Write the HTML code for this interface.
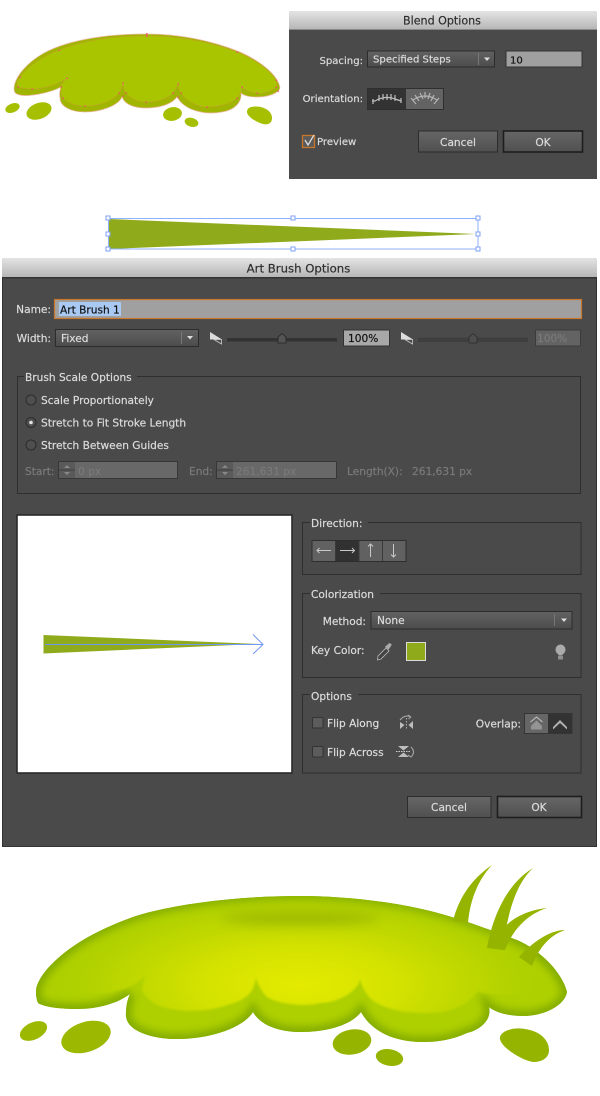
<!DOCTYPE html>
<html><head><meta charset="utf-8"><style>
html,body{margin:0;padding:0;background:#fff;width:600px;height:1096px;overflow:hidden}
svg{display:block}
text{font-family:"DejaVu Sans","Liberation Sans",sans-serif;font-size:10.6px;fill:#dcdcdc;stroke:#dcdcdc;stroke-width:.18}
.s{font-size:10.1px}
.t{fill:#2e2e2e;stroke:#2e2e2e;font-size:11.1px}
.t2{fill:#2e2e2e;stroke:#2e2e2e;font-size:11.7px}
.d{fill:#7a7a7a;stroke:#7a7a7a}
.k{fill:#111;stroke:#111}
.g{fill:none;stroke:#2f2f2f;stroke-width:1}
</style></head><body>
<svg width="600" height="1096" viewBox="0 0 600 1096" xmlns="http://www.w3.org/2000/svg">
<defs>
<linearGradient id="tb" x1="0" y1="0" x2="0" y2="1"><stop offset="0" stop-color="#e4e4e4"/><stop offset="1" stop-color="#b4b4b4"/></linearGradient>
<linearGradient id="btn" x1="0" y1="0" x2="0" y2="1"><stop offset="0" stop-color="#666"/><stop offset="1" stop-color="#505050"/></linearGradient>
<linearGradient id="sel" x1="0" y1="0" x2="0" y2="1"><stop offset="0" stop-color="#626262"/><stop offset="1" stop-color="#4c4c4c"/></linearGradient>
<radialGradient id="rg2" gradientUnits="userSpaceOnUse" cx="300" cy="985" r="250" gradientTransform="translate(0 610.700) scale(1 .38)"><stop offset="0" stop-color="#e4ea00"/><stop offset=".4" stop-color="#d4e200"/><stop offset=".75" stop-color="#bcd600" stop-opacity=".85"/><stop offset="1" stop-color="#aed000" stop-opacity="0"/></radialGradient>
<filter id="b1" x="-20%" y="-20%" width="140%" height="140%"><feGaussianBlur stdDeviation="1"/></filter>
<filter id="b35" x="-10%" y="-20%" width="120%" height="140%"><feGaussianBlur stdDeviation="4"/></filter>
<filter id="b4" x="-50%" y="-200%" width="200%" height="500%"><feGaussianBlur stdDeviation="6"/></filter>
<path id="bigp" d="M36,990 C38,975 58,955 83,940 C105,927 130,917 150,912 C195,901 250,896 300,896 C340,896 385,901 417,908 C455,916 490,930 517,940 C540,950 562,972 567,992 C565,1005 545,1016 523,1016 C510,1016 496,1013 489,1007 C492,1020 480,1030 467,1033 C452,1040 437,1042 423,1042 C395,1042 372,1032 361,1012 C352,1024 330,1032 300,1032 C285,1032 262,1028 253,1012 C243,1028 210,1039 177,1039 C150,1039 124,1030 126,1013 C126,1005 128,998 130,994 C115,1005 95,1009 77,1009 C60,1009 44,1007 38,1003 C36,998 36,994 36,990Z"/>
<clipPath id="big"><use href="#bigp"/></clipPath>
<path id="topo" d="M14,88 C15,76 28,62 44,53 C70,39 110,34 146,34 C185,34 215,42 240,52 C258,60 278,74 280,88 C279,93 268,97 258,97 C250,97 244,96 241,93 C242,102 235,110 222,112 C205,115 185,111 177,97 C172,104 160,108 146,108 C135,108 125,105 122,97 C118,106 100,112 85,112 C70,112 60,106 60,98 C59,93 60,90 61,87 C50,93 28,97 20,95 C15,94 14,92 14,88Z"/>
</defs>

<!-- top blob -->
<use href="#topo" fill="#9fb500" stroke="#eeb7a2" stroke-width=".7"/>
<path d="M18,87 C16,84 18,80 20,77 C28,66 42,57 59,50 C85,40 115,36 147,36 C180,36 210,42 237,52 C252,58 270,70 276,80 C277,83 277,85 276,87 C270,92 262,94 257,93 C250,92 245,90 242,87 C242,92 240,95 237,98 C230,104 218,107 207,107 C196,107 186,100 181,93 C179,90 178,87 178,84 C177,87 175,90 173,93 C167,99 157,102 146,102 C137,102 130,98 126,93 C124,90 123,87 123,83 C122,87 121,90 119,93 C112,102 97,106 85,106 C76,106 67,103 63,98 C61,94 60,90 61,87 C62,84 64,81 67,78 C58,84 45,89 32,89 C27,89 22,88 18,87Z" fill="#a8c500" stroke="#d9953f" stroke-width=".5" stroke-opacity=".75"/>
<g fill="#f0506a" opacity=".85"><rect x="146" y="33" width="1.500" height="4"/><rect x="58.500" y="49.500" width="1.500" height="1.500"/><rect x="236.500" y="51.500" width="1.500" height="1.500"/><rect x="19.500" y="76.500" width="1.500" height="1.500"/><rect x="17.500" y="86.500" width="1.500" height="1.500"/><rect x="31.500" y="88.500" width="1.500" height="1.500"/><rect x="66.500" y="77.500" width="1.500" height="1.500"/><rect x="60.500" y="86.500" width="1.500" height="1.500"/><rect x="62.500" y="97.500" width="1.500" height="1.500"/><rect x="84.500" y="105.500" width="1.500" height="1.500"/><rect x="118.500" y="92.500" width="1.500" height="1.500"/><rect x="122.500" y="82.500" width="1.500" height="1.500"/><rect x="122.500" y="95.500" width="1.500" height="1.500"/><rect x="125.500" y="92.500" width="1.500" height="1.500"/><rect x="145.500" y="101.500" width="1.500" height="1.500"/><rect x="172.500" y="92.500" width="1.500" height="1.500"/><rect x="177.500" y="83.500" width="1.500" height="1.500"/><rect x="177.500" y="96.500" width="1.500" height="1.500"/><rect x="180.500" y="92.500" width="1.500" height="1.500"/><rect x="206.500" y="106.500" width="1.500" height="1.500"/><rect x="236.500" y="97.500" width="1.500" height="1.500"/><rect x="241.500" y="86.500" width="1.500" height="1.500"/><rect x="256.500" y="92.500" width="1.500" height="1.500"/><rect x="275.500" y="86.500" width="1.500" height="1.500"/><rect x="275.500" y="79.500" width="1.500" height="1.500"/><rect x="277.500" y="90.500" width="1.500" height="1.500"/></g>
<g fill="#a6bf00">
<ellipse cx="12.500" cy="108" rx="7.500" ry="4.500" transform="rotate(-22 12.500 108)"/>
<ellipse cx="39" cy="111" rx="13" ry="8" transform="rotate(-20 39 111)"/>
<ellipse cx="172.500" cy="114" rx="9.500" ry="6.800" transform="rotate(-10 172.500 114)"/>
<ellipse cx="191.500" cy="122.300" rx="7" ry="4.500" transform="rotate(15 191.500 122.300)"/>
<path d="M247,111 C248,106 255,106 261,107 C268,109 272,113 272,118 C272,124 267,125 263,124 C256,122 246,116 247,111Z"/>
</g>

<!-- Blend Options -->
<path d="M289,179 V14 Q289,11 292,11 H594 Q597,11 597,14 V179Z" fill="#4a4a4a"/>
<path d="M289,30 V14 Q289,11 292,11 H594 Q597,11 597,14 V30Z" fill="url(#tb)"/>
<rect x="289" y="29" width="308" height="1" fill="#8a8a8a"/>
<text class="t" x="442" y="24.500" text-anchor="middle">Blend Options</text>
<text class="s" x="363" y="64" text-anchor="end">Spacing:</text>
<rect x="367.500" y="51" width="127" height="16" fill="url(#sel)" stroke="#2c2c2c"/>
<text class="s" x="373" y="62.500">Specified Steps</text>
<rect x="478" y="53" width="1" height="12" fill="#777"/><path d="M484,57.500h6l-3,3.500Z" fill="#ddd"/>
<rect x="506" y="51" width="76" height="16" fill="#a0a0a0" stroke="#333"/>
<text class="k s" x="510" y="63.500">10</text>
<text class="s" x="363" y="102" text-anchor="end">Orientation:</text>
<rect x="367.500" y="88.500" width="76" height="21" fill="#636363" stroke="#2f2f2f"/>
<rect x="368" y="89" width="38" height="20" fill="#333"/>
<path d="M373,99 V104 M372,101 H375 Q385,95 395,99 L401,101 M401,98 V103 M379,95 V101 M383,94 V100 M387,94 V100 M391,94 V100 M395,95 V101" fill="none" stroke="#c0c0c0" stroke-width="1.200"/>
<path d="M413,100 Q425,92 437,100 M411,98 L416,104 M415,95 L419,101 M420,93 L423,99 M425,92 V98 M430,93 L428,99 M434,95 L431,101 M439,98 L434,104" fill="none" stroke="#b4b4b4" stroke-width="1.200"/>
<rect x="302.500" y="135.500" width="12" height="12" fill="#5a5a5a" stroke="#c9752a" stroke-width="1.300"/>
<path d="M305,140 L308,145 L314,135" fill="none" stroke="#ddd" stroke-width="1.300"/>
<text class="s" x="317" y="145">Preview</text>
<rect x="418.500" y="131" width="79" height="21" fill="url(#btn)" stroke="#2c2c2c"/>
<text x="458" y="146" text-anchor="middle">Cancel</text>
<rect x="503.500" y="131" width="79" height="21" fill="url(#btn)" stroke="#1e1e1e" stroke-width="1.600"/>
<text x="543" y="146" text-anchor="middle">OK</text>

<!-- selection triangle -->
<path d="M109,219 L476,234 L109,249Z" fill="#8fab1c"/>
<rect x="108.500" y="218.500" width="369.500" height="30.500" fill="none" stroke="#8fb0ff" stroke-width="1"/>
<g fill="#fff" stroke="#7ea2f5" stroke-width="1"><rect x="106" y="216" width="4" height="4"/><rect x="291" y="216" width="4" height="4"/><rect x="476" y="216" width="4" height="4"/><rect x="106" y="232" width="4" height="4"/><rect x="476" y="232" width="4" height="4"/><rect x="106" y="247" width="4" height="4"/><rect x="291" y="247" width="4" height="4"/><rect x="476" y="247" width="4" height="4"/></g>

<!-- Art Brush Options -->
<path d="M2,847 V261 Q2,258 5,258 H594 Q597,258 597,261 V847Z" fill="#4a4a4a"/>
<path d="M2.500,278 V846.500 H596.500 V278" fill="none" stroke="#333"/>
<path d="M2,278 V261 Q2,258 5,258 H594 Q597,258 597,261 V278Z" fill="url(#tb)"/>
<rect x="2" y="277" width="595" height="1.500" fill="#333"/>
<text class="t2" x="298.500" y="272.500" text-anchor="middle">Art Brush Options</text>
<text x="51" y="313" text-anchor="end">Name:</text>
<rect x="54.500" y="299.500" width="527" height="19" fill="#a0a0a0" stroke="#c9772a" stroke-width="1.200"/>
<rect x="59" y="302" width="62" height="14" fill="#a9c9f2"/>
<text class="k" x="60" y="313.500">Art Brush 1</text>
<text x="51" y="342" text-anchor="end">Width:</text>
<rect x="55.500" y="329.500" width="143" height="17" fill="url(#sel)" stroke="#2c2c2c"/>
<text x="61" y="342">Fixed</text>
<rect x="181" y="332" width="1" height="12" fill="#777"/><path d="M187,336 h6 l-3,3.500Z" fill="#ddd"/>
<path d="M210,332 L222,339.500 H210Z" fill="#dcdcdc"/><path d="M214,339.500 H221.500 V344Z" fill="#4a4a4a" stroke="#ccc" stroke-width=".8"/>
<rect x="227" y="338" width="110" height="3.500" fill="#333"/>
<path d="M278,341 V337 L282,333.500 L286,337 V343 H278Z" fill="#555" stroke="#2d2d2d"/>
<rect x="343.500" y="330" width="46" height="16" fill="#a8a8a8" stroke="#333"/>
<text class="k" x="348" y="342">100%</text>
<path d="M401,332 L413,339.500 H401Z" fill="#dcdcdc"/><path d="M405,339.500 H412.500 V344Z" fill="#4a4a4a" stroke="#ccc" stroke-width=".8"/>
<rect x="418.500" y="338" width="109" height="3.500" fill="#3f3f3f" stroke="#383838" stroke-width=".5"/>
<path d="M469,341 V337 L473,333.500 L477,337 V343 H469Z" fill="#4e4e4e" stroke="#333"/>
<rect x="535.500" y="330" width="45" height="16" fill="#636363" stroke="#3c3c3c"/>
<text class="d" x="537" y="342">100%</text>

<!-- Brush Scale -->
<path class="g" d="M24,376.500 H17.500 V493.500 H580.500 V376.500 H137"/>
<text x="25" y="381">Brush Scale Options</text>
<g fill="#4f4f4f" stroke="#2c2c2c"><circle cx="31" cy="400" r="5"/><circle cx="31" cy="422.500" r="5"/><circle cx="31" cy="445" r="5"/></g>
<circle cx="31" cy="422.500" r="1.800" fill="#e4e4e4"/>
<text x="41" y="404">Scale Proportionately</text>
<text x="41" y="426.500">Stretch to Fit Stroke Length</text>
<text x="41" y="449">Stretch Between Guides</text>
<text class="d" x="25" y="475">Start:</text>
<rect x="58.500" y="461.500" width="119" height="17" fill="#686868" stroke="#373737"/>
<rect x="59" y="462" width="16" height="16" fill="#5a5a5a"/><path d="M59,470 h16" stroke="#3d3d3d"/><path d="M64,468 l3,-3 l3,3Z M64,472 l3,3 l3,-3Z" fill="#888"/>
<text class="d" x="78" y="475">0 px</text>
<text class="d" x="189" y="475">End:</text>
<rect x="216.500" y="461.500" width="120" height="17" fill="#686868" stroke="#373737"/>
<rect x="217" y="462" width="16" height="16" fill="#5a5a5a"/><path d="M217,470 h16" stroke="#3d3d3d"/><path d="M222,468 l3,-3 l3,3Z M222,472 l3,3 l3,-3Z" fill="#888"/>
<text class="d" x="236" y="475">261,631 px</text>
<text class="d" x="347" y="475">Length(X):</text>
<text class="d" x="412" y="475">261,631 px</text>

<!-- Preview -->
<rect x="17" y="515" width="275" height="258" fill="#fff" stroke="#2a2a2a" stroke-width="1.600"/>
<path d="M43.500,635 L258,644 L43.500,653.500Z" fill="#8fab1c"/>
<path d="M45,644.500 H263 M253,634.500 L263,644.500 L253,654" fill="none" stroke="#6f96f2" stroke-width="1"/>

<!-- Direction -->
<path class="g" d="M310,522.500 H302.500 V574.500 H581 V522.500 H368"/>
<text x="311" y="527">Direction:</text>
<rect x="312" y="540.500" width="94" height="21" fill="#616161" stroke="#2e2e2e"/>
<rect x="336" y="541" width="23" height="20" fill="#313131"/>
<path d="M335.500,541 V561 M359,541 V561 M382.500,541 V561" stroke="#3a3a3a"/>
<g fill="none" stroke="#c8c8c8" stroke-width="1"><path d="M317,550.500 H331 M319.500,548 L317,550.500 L319.500,553"/><path d="M340,550.500 H354.500 M352,548 L354.500,550.500 L352,553"/><path d="M370.500,544 V557 M368,546.500 L370.500,544 L373,546.500"/><path d="M393.500,544 V557 M391,554.500 L393.500,557 L396,554.500"/></g>

<!-- Colorization -->
<path class="g" d="M310,593.500 H302.500 V677.500 H581 V593.500 H380"/>
<text x="311" y="598">Colorization</text>
<text x="366" y="625" text-anchor="end">Method:</text>
<rect x="371" y="611.500" width="201" height="17.500" fill="url(#sel)" stroke="#2c2c2c"/>
<text x="377" y="624">None</text>
<rect x="554" y="614" width="1" height="12" fill="#777"/><path d="M561,618.500 h6 l-3,3.500Z" fill="#ddd"/>
<text x="311" y="654">Key Color:</text>
<path d="M378,656 L386,648 L389,651 L381,659 L377.500,660Z" fill="#444" stroke="#bbb" stroke-width=".8"/>
<path d="M385,647 L389,643.500 Q391,643 391.500,645 L388.500,649.500Z" fill="#aaa" stroke="#999" stroke-width=".5"/>
<rect x="406.500" y="642.500" width="19" height="18" fill="#8fab1c" stroke="#dadada" stroke-width="1"/>
<path d="M558.500,655.500 h4 v-1 q3,-2 3,-5 a4.500,4.500 0 0 0 -10,0 q0,3 3,5Z" fill="#aaa"/><rect x="558" y="656" width="5" height="3.500" fill="#8f8f8f"/>

<!-- Options -->
<path class="g" d="M310,694.500 H302.500 V773 H581 V694.500 H358"/>
<text x="311" y="700">Options</text>
<rect x="312.500" y="717.500" width="10.500" height="10.500" rx="1" fill="#5c5c5c" stroke="#333"/>
<text x="327" y="727">Flip Along</text>
<rect x="312.500" y="746.500" width="10.500" height="10.500" rx="1" fill="#5c5c5c" stroke="#333"/>
<text x="327" y="756">Flip Across</text>
<path d="M400,722 L404.500,725 L400,729Z M413,721 L408.500,725 L413,729Z" fill="#bdbdbd"/>
<path d="M406.500,718 V730" stroke="#aaa" stroke-dasharray="1.500 1.500"/>
<path d="M400,720 Q405,714 411,717 M411,717 L408,715 M411,717 L408.500,719" fill="none" stroke="#aaa"/>
<path d="M398,746 H409 L403.500,750.500Z M398,757 H409 L403.500,752.500Z" fill="#bdbdbd"/>
<path d="M396,751.500 H411" stroke="#ccc" stroke-dasharray="1.500 1"/>
<path d="M411,747 Q416,752 411,757 L408,755" fill="none" stroke="#aaa"/>
<text x="521" y="727.500" text-anchor="end">Overlap:</text>
<rect x="524.500" y="713.500" width="47.500" height="20" fill="#666" stroke="#353535"/>
<rect x="548" y="714" width="24" height="19" fill="#333"/>
<path d="M531,726 L536.500,720.500 L542,726 V729.500 H531Z" fill="#949494"/><path d="M530.500,722 L536.500,717 L542.500,722" fill="none" stroke="#c4c4c4"/>
<path d="M553,727 L560,720 L567,727 V729.500 L560,723 L553,729.500Z" fill="#b0b0b0"/>
<rect x="407.500" y="796.500" width="83.500" height="21" fill="url(#btn)" stroke="#2c2c2c"/>
<text x="449" y="811" text-anchor="middle">Cancel</text>
<rect x="497.500" y="796.500" width="84" height="21" fill="url(#btn)" stroke="#1e1e1e" stroke-width="1.600"/>
<text x="539" y="811" text-anchor="middle">OK</text>

<!-- big blob -->
<g clip-path="url(#big)">
<rect x="20" y="880" width="560" height="180" fill="#88b000"/>
<use href="#bigp" fill="#aed000" stroke="#84ad00" stroke-width="12" filter="url(#b35)"/>
<path d="M40,800 H560 V980 C540,995 510,998 477,992 C470,1002 460,1008 443,1012 C428,1014 412,1013 400,1011 C385,1008 375,1003 370,998 C365,992 361,985 360,979 C359,985 355,989 350,993 C340,1000 330,1003 320,1003 C312,1005 306,1005 300,1005 C285,1004 273,1001 267,997 C262,992 258,985 256,978 C255,984 253,989 250,993 C245,999 236,1003 227,1005 C214,1010 200,1011 187,1011 C175,1010 165,1008 157,1005 C150,1001 144,996 142,990 C142,985 144,977 147,972 C140,985 125,990 105,993 C80,997 55,990 40,975Z" fill="url(#rg2)" filter="url(#b1)"/>
<ellipse cx="300" cy="918" rx="80" ry="7" fill="#9cba00" filter="url(#b4)"/>
</g>
<g fill="#95b400">
<path d="M492,865 C470,880 458,900 453,921 L468,923 C470,900 478,880 492,865Z"/>
<path d="M533,868 C505,885 492,920 487,948 L503,950 C507,915 515,885 533,868Z"/>
<path d="M547,908 C528,910 512,918 504,928 L502,950 L505,950 C512,932 525,915 547,908Z"/>
<path d="M565,930 C548,930 530,945 519,957 L532,966 C538,950 548,936 565,930Z"/>
<ellipse cx="33.500" cy="1031" rx="14.500" ry="8.500" transform="rotate(-25 33.500 1031)" fill="#9cb800"/>
<ellipse cx="86" cy="1037" rx="25.500" ry="15" transform="rotate(-18 86 1037)" fill="#9cb800"/>
<ellipse cx="352" cy="1042" rx="19.500" ry="12.500" transform="rotate(-10 352 1042)"/>
<ellipse cx="389.500" cy="1057.500" rx="13.800" ry="8.300" transform="rotate(10 389.500 1057.500)"/>
<path d="M500,1037 C502,1030 515,1027 525,1029 C540,1031 549,1040 549,1050 C549,1058 542,1062 533,1062 C520,1060 498,1045 500,1037Z"/>
</g>
</svg>
</body></html>
